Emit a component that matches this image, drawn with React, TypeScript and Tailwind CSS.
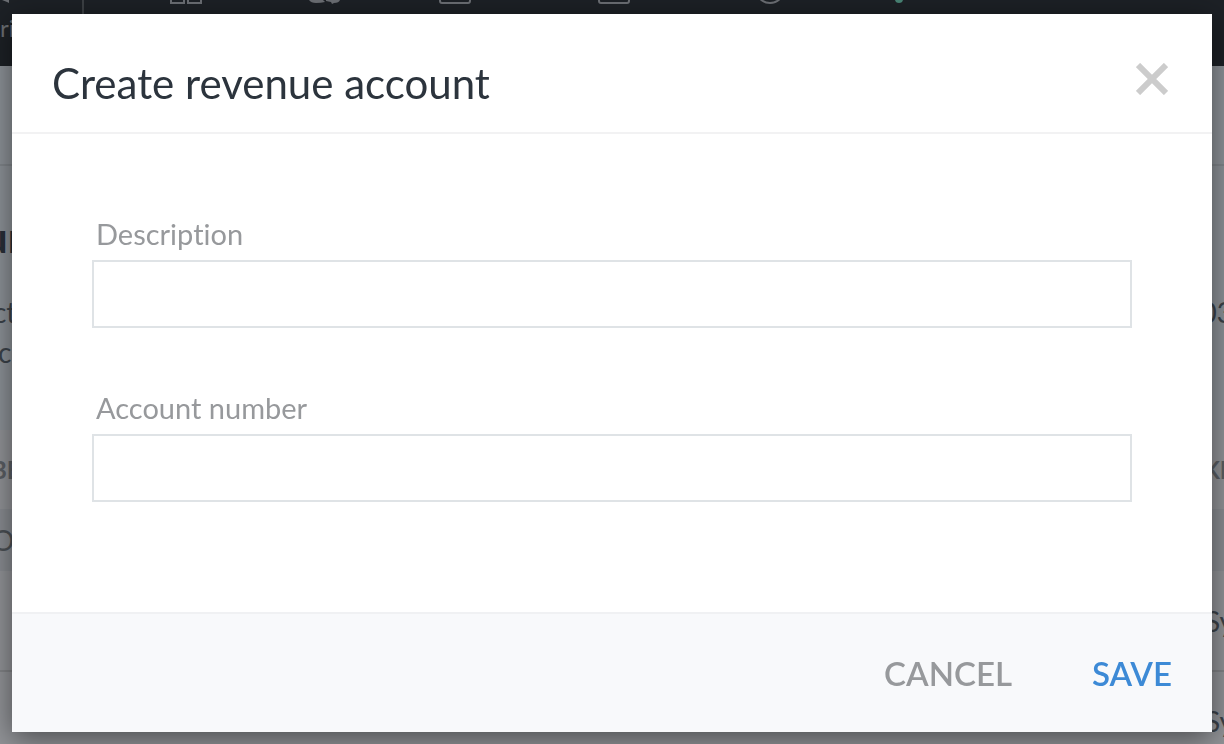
import { useState } from 'react';

const rows = [
  { name: '', system: 'Sy' },
  { name: '', system: 'Sy' },
];

function TopNav() {
  return (
    <header className="flex h-[66px] shrink-0 items-start bg-[#1d2126] text-[#6c6f74]">
      <div className="h-full w-[84px] shrink-0 border-r-2 border-[#3d4145]">
        <svg width="12" height="6" viewBox="0 0 12 6" fill="currentColor" aria-hidden="true">
          <path d="M2 0H9V3L7 2Z" />
        </svg>
        <p className="mt-2 text-[24px] leading-7">ri</p>
      </div>
      <nav className="flex items-start pl-[86px]">
        <svg width="32" height="6" viewBox="0 0 32 6" fill="none" stroke="currentColor" strokeWidth="2" aria-hidden="true">
          <path d="M1 0V3H14V0M18 0V3H31V0" />
        </svg>
        <svg className="ml-[106px]" width="34" height="6" viewBox="0 0 34 6" fill="currentColor" aria-hidden="true">
          <path d="M1 0H15L17 2Q13 3 8 3Q3 3 1 0ZM18 0H32Q31 3 26 3L24 4L23 2L18 1Z" />
        </svg>
        <svg className="ml-[97px]" width="32" height="6" viewBox="0 0 32 6" fill="none" stroke="currentColor" strokeWidth="2" aria-hidden="true">
          <path d="M1 0V1Q1 3 3 3H29Q31 3 31 1V0" />
        </svg>
        <svg className="ml-[127px]" width="32" height="6" viewBox="0 0 32 6" fill="none" stroke="currentColor" strokeWidth="2" aria-hidden="true">
          <path d="M1 0V1Q1 3 3 3H29Q31 3 31 1V0" />
        </svg>
        <svg className="ml-[127px]" width="26" height="6" viewBox="0 0 26 6" fill="none" stroke="currentColor" strokeWidth="2" aria-hidden="true">
          <circle cx="13" cy="-11" r="14" />
        </svg>
        <svg className="ml-[112px] text-[#498576]" width="8" height="6" viewBox="0 0 8 6" fill="currentColor" aria-hidden="true">
          <circle cx="4" cy="-1" r="4" />
        </svg>
      </nav>
    </header>
  );
}

function AccountsPage() {
  return (
    <div className="flex h-screen flex-col overflow-hidden bg-[#8d9298] text-[#3c434a]">
      <TopNav />
      <div className="h-[100px] shrink-0 border-b-2 border-[#81868b]" />
      <section className="h-[264px] shrink-0 pt-[46px]">
        <h2 className="-ml-[16px] text-[42px] leading-[50px] font-bold text-[#292f38]">ur</h2>
        <div className="mt-[30px] flex justify-between text-[28px] leading-10">
          <p className="-ml-[7px]">
            ct
            <br />
            <span className="pl-[5px]">c</span>
          </p>
          <p className="-mr-[9px]">03</p>
        </div>
      </section>
      <table className="w-full border-collapse bg-[#929498] text-[28px]">
        <thead>
          <tr className="h-[79px] text-[24px] text-[#5b5f64]">
            <th className="p-0 text-left font-bold">
              <span className="-ml-[9px]">BE</span>
            </th>
            <th className="p-0 text-right font-bold">
              <span className="-mr-[3px]">KI</span>
            </th>
          </tr>
        </thead>
        <tbody>
          <tr className="h-[62px] bg-[#8a8d92] text-[#4c5156]">
            <td className="p-0">
              <span className="-ml-[8px]">O</span>
            </td>
            <td />
          </tr>
          {rows.map((row, i) => (
            <tr key={i} className="h-[100px] border-b-2 border-[#828487]">
              <td className="p-0">{row.name}</td>
              <td className="p-0 text-right">
                <span className="-mr-[10px]">{row.system}</span>
              </td>
            </tr>
          ))}
        </tbody>
      </table>
    </div>
  );
}

type FieldProps = {
  id: string;
  label: string;
  value: string;
  onChange: (value: string) => void;
};

function Field({ id, label, value, onChange }: FieldProps) {
  return (
    <div>
      <label htmlFor={id} className="mb-2 block pl-1 text-[29px] leading-9 text-[#97999c]">
        {label}
      </label>
      <input
        id={id}
        type="text"
        value={value}
        onChange={(e) => onChange(e.target.value)}
        className="block h-[68px] w-full border-2 border-[#dfe3e6] bg-white px-4 text-[29px] text-[#2c343d] outline-none"
      />
    </div>
  );
}

export default function App() {
  const [description, setDescription] = useState('');
  const [accountNumber, setAccountNumber] = useState('');

  return (
    <div className="font-['Lato',sans-serif] [font-variant-ligatures:none]">
      <AccountsPage />
      <div className="fixed inset-0 overflow-hidden px-3 pt-[14px]">
        <form
          role="dialog"
          aria-labelledby="dialog-title"
          onSubmit={(e) => e.preventDefault()}
          className="bg-white shadow-[0_6px_28px_rgba(0,0,0,0.5)]"
        >
          <div className="flex h-[120px] items-center justify-between border-b-2 border-[#f2f2f3] pt-3 pr-11 pl-10">
            <h1 id="dialog-title" className="pt-2 text-[42px] leading-[50px] text-[#2c343d]">
              Create revenue account
            </h1>
            <button type="button" aria-label="Close" className="text-[#cccccc]">
              <svg width="32" height="32" viewBox="0 0 32 32" fill="none" stroke="currentColor" strokeWidth="6">
                <path d="M2 2L30 30M30 2L2 30" />
              </svg>
            </button>
          </div>
          <div className="flex flex-col gap-[62px] px-20 pt-[82px] pb-[110px]">
            <Field id="description" label="Description" value={description} onChange={setDescription} />
            <Field id="account-number" label="Account number" value={accountNumber} onChange={setAccountNumber} />
          </div>
          <div className="flex h-[120px] items-center justify-end gap-20 border-t-2 border-[#f0f1f3] bg-[#f8f9fb] px-10 text-[33px] leading-10 font-semibold">
            <button type="button" className="text-[#97999c]">
              CANCEL
            </button>
            <button type="submit" className="text-[#3d8ad6]">
              SAVE
            </button>
          </div>
        </form>
      </div>
    </div>
  );
}
